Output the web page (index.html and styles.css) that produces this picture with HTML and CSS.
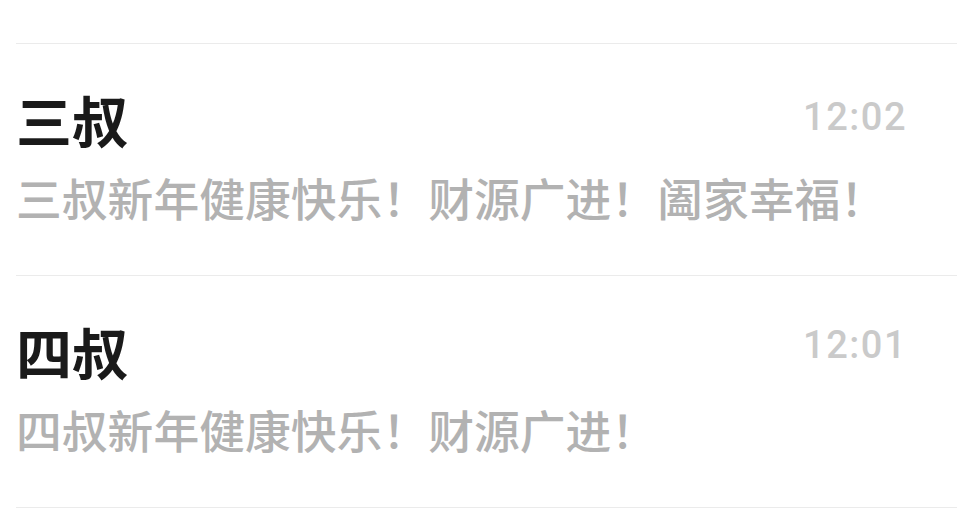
FILE: index.html
```html
<!DOCTYPE html>
<html lang="zh-CN">
<head>
<meta charset="utf-8">
<title>消息列表</title>
<link rel="stylesheet" href="styles.css">
</head>
<body>
<div class="list">
  <div class="item item-prev"></div>
  <div class="item">
    <div class="head">
      <div class="name">三叔</div>
      <div class="time">12:02</div>
    </div>
    <div class="msg">三叔新年健康快乐！财源广进！阖家幸福！</div>
  </div>
  <div class="item">
    <div class="head">
      <div class="name">四叔</div>
      <div class="time time-b">12:01</div>
    </div>
    <div class="msg">四叔新年健康快乐！财源广进！</div>
  </div>
</div>
</body>
</html>
```
FILE: styles.css
```css
html, body {
  margin: 0;
  padding: 0;
  background: #ffffff;
}
body {
  font-family: "Noto Sans CJK SC", "Noto Sans", sans-serif;
  overflow: hidden;
}
.list {
  padding-left: 16px;
}
.item {
  border-bottom: 1px solid #ebebeb;
  padding: 43px 50px 48px 0;
}
.item-prev {
  height: 44px;
  padding: 0;
  box-sizing: border-box;
}
.head {
  display: flex;
  justify-content: space-between;
  align-items: flex-start;
}
.name {
  font-size: 56px;
  line-height: 64px;
  font-weight: 700;
  color: #1a1a1a;
}
.time {
  font-family: Roboto, "Liberation Sans", sans-serif;
  font-weight: 500;
  font-size: 38px;
  letter-spacing: 1.5px;
  line-height: 64px;
  color: #cacaca;
  margin-top: -2px;
}
.time-b {
  margin-top: -6px;
}
.msg {
  margin-top: 16px;
  font-size: 45.8px;
  line-height: 60px;
  font-weight: 500;
  color: #b2b2b2;
  white-space: nowrap;
}
```
